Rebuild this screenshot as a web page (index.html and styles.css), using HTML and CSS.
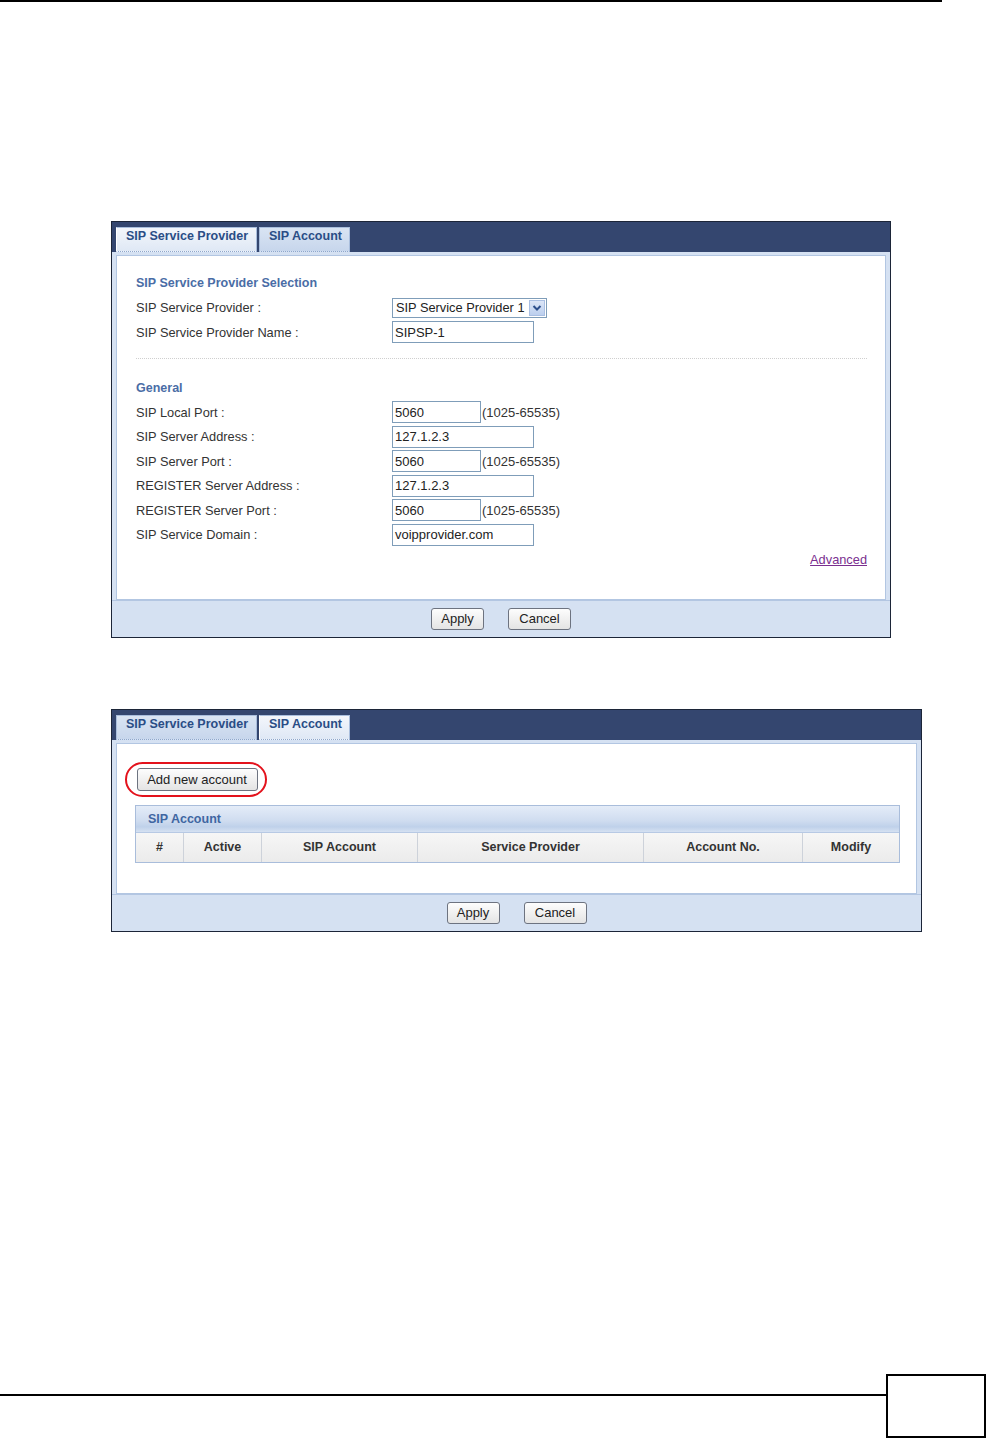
FILE: index.html
```html
<!DOCTYPE html>
<html lang="en">
<head>
  <meta charset="UTF-8" />
  <title>VoIP &gt; SIP Settings</title>
  <link rel="stylesheet" href="styles.css">
</head>
<body>
  <div class="page">
    <div class="top-rule"></div>

    <!-- Screen 1: SIP Service Provider -->
    <div class="panel panel-provider">
      <div class="panel-head">
        <div class="tab tab-wide active">SIP Service Provider</div>
        <div class="tab tab-narrow">SIP Account</div>
      </div>
      <div class="panel-body provider-body">
        <div class="row section-title">SIP Service Provider Selection</div>
        <div class="row">
          <span class="label">SIP Service Provider :</span>
          <div class="select">
            <span class="select-text">SIP Service Provider 1</span>
            <span class="select-btn">
              <svg width="10" height="8" viewBox="0 0 10 8"><path d="M1.5 2 L5 5.5 L8.5 2" fill="none" stroke="#2c4f8c" stroke-width="2"/></svg>
            </span>
          </div>
        </div>
        <div class="row">
          <span class="label">SIP Service Provider Name :</span>
          <span class="input">SIPSP-1</span>
        </div>
        <div class="divider"></div>
        <div class="row section-title">General</div>
        <div class="row">
          <span class="label">SIP Local Port :</span>
          <span class="input short">5060</span><span class="hint">(1025-65535)</span>
        </div>
        <div class="row">
          <span class="label">SIP Server Address :</span>
          <span class="input">127.1.2.3</span>
        </div>
        <div class="row">
          <span class="label">SIP Server Port :</span>
          <span class="input short">5060</span><span class="hint">(1025-65535)</span>
        </div>
        <div class="row">
          <span class="label">REGISTER Server Address :</span>
          <span class="input">127.1.2.3</span>
        </div>
        <div class="row">
          <span class="label">REGISTER Server Port :</span>
          <span class="input short">5060</span><span class="hint">(1025-65535)</span>
        </div>
        <div class="row">
          <span class="label">SIP Service Domain :</span>
          <span class="input">voipprovider.com</span>
        </div>
        <div class="row row-right">
          <a class="advanced" href="#">Advanced</a>
        </div>
      </div>
      <div class="panel-foot">
        <button class="btn btn-apply">Apply</button>
        <button class="btn btn-cancel">Cancel</button>
      </div>
    </div>

    <!-- Screen 2: SIP Account -->
    <div class="panel panel-account">
      <div class="panel-head">
        <div class="tab tab-wide">SIP Service Provider</div>
        <div class="tab tab-narrow active">SIP Account</div>
      </div>
      <div class="panel-body account-body">
        <div class="highlight">
          <button class="btn btn-add">Add new account</button>
        </div>
        <div class="table">
          <div class="table-title">SIP Account</div>
          <div class="table-head">
            <span class="col c-num">#</span>
            <span class="col c-active">Active</span>
            <span class="col c-account">SIP Account</span>
            <span class="col c-provider">Service Provider</span>
            <span class="col c-no">Account No.</span>
            <span class="col c-modify">Modify</span>
          </div>
        </div>
      </div>
      <div class="panel-foot">
        <button class="btn btn-apply">Apply</button>
        <button class="btn btn-cancel">Cancel</button>
      </div>
    </div>

    <div class="page-foot">
      <div class="foot-line"></div>
      <div class="page-num"></div>
    </div>
  </div>
</body>
</html>
```

FILE: styles.css
```css
* {
  margin: 0;
  padding: 0;
  box-sizing: border-box;
}

body {
  font-family: 'Liberation Sans', Arial, sans-serif;
  background: #fff;
  color: #333;
  font-size: 12.8px;
}

.page {
  width: 987px;
  height: 1438px;
}

.top-rule {
  width: 942px;
  height: 2px;
  background: #000;
}

/* Screen frame */
.panel {
  margin-left: 111px;
  border: 1px solid #1c2538;
  background: #d5e1f2;
}

.panel-provider {
  width: 780px;
  margin-top: 219px;
}

.panel-account {
  width: 811px;
  margin-top: 71px;
}

.panel-head {
  height: 30px;
  background: #34466f;
  display: flex;
  align-items: flex-end;
  gap: 2px;
  padding-left: 4px;
}

.tab {
  height: 25px;
  display: flex;
  align-items: center;
  padding: 0 0 7px 9px;
  font-weight: bold;
  font-size: 12.5px;
  color: #2a4d86;
  background: linear-gradient(#d9e4f3, #c7d6ec);
  border: 1px solid #a9bedd;
  border-bottom: 1px dotted #8ea7cc;
}

.tab.active {
  background: linear-gradient(#f3f6fb, #dfe8f5);
  border-left-color: #fff;
}

.tab-wide {
  width: 141px;
}

.tab-narrow {
  width: 91px;
}

.panel-body {
  margin: 3px 4px 0;
  background: #fff;
  border: 1px solid #b2c6e2;
}

.panel-foot {
  height: 37px;
  border-top: 1px solid #b3c6e2;
  display: flex;
  align-items: center;
  justify-content: center;
  gap: 24px;
}

/* Screen 1 form */
.provider-body {
  padding: 15px 18px 27px 19px;
}

.row {
  height: 24.5px;
  display: flex;
  align-items: center;
}

.section-title {
  font-weight: bold;
  font-size: 12.5px;
  color: #4a6da6;
}

.label {
  width: 256px;
  color: #333;
}

.input {
  width: 142px;
  height: 22px;
  border: 1px solid #7f9db9;
  padding-left: 2px;
  display: flex;
  align-items: center;
  font-size: 13px;
  color: #222;
  background: #fff;
}

.input.short {
  width: 89px;
}

.hint {
  padding-left: 1px;
  font-size: 13px;
  color: #333;
}

.select {
  width: 155px;
  height: 20px;
  border: 1px solid #7f9db9;
  display: flex;
  align-items: center;
  justify-content: space-between;
  padding: 0 1px 0 3px;
  color: #222;
}

.select-btn {
  width: 16px;
  height: 16px;
  background: linear-gradient(#dbe5f7, #bccfee);
  border: 1px solid #a9bfe3;
  display: flex;
  align-items: center;
  justify-content: center;
}

.divider {
  margin: 13px 0 17px;
  border-top: 1px dotted #cfcfcf;
}

.row-right {
  justify-content: flex-end;
}

.advanced {
  color: #7a2f8f;
  text-decoration: underline;
}

/* Buttons */
.btn {
  height: 22px;
  font-family: 'Liberation Sans', Arial, sans-serif;
  font-size: 13px;
  color: #222;
  background: linear-gradient(#fdfdfd, #e4e4e4);
  border: 1px solid #6d7380;
  border-radius: 3px;
}

.btn-apply {
  width: 53px;
}

.btn-cancel {
  width: 63px;
}

.btn-add {
  width: 121px;
  height: 23px;
}

/* Screen 2 */
.account-body {
  padding: 18px 16px 30px 8px;
}

.highlight {
  display: flex;
  width: 142px;
  height: 35px;
  align-items: center;
  padding-left: 9.5px;
  border: 2.5px solid #e3121c;
  border-radius: 18px;
}

.table {
  margin: 8px 0 0 10px;
  width: 765px;
  border: 1px solid #a9bddb;
}

.table-title {
  height: 27px;
  padding-left: 12px;
  display: flex;
  align-items: center;
  font-weight: bold;
  font-size: 12.5px;
  color: #3f66a2;
  background: linear-gradient(#e4ecf8, #d0ddf0 55%, #bfd1ea 80%, #d5e1f2);
  border-bottom: 1px solid #b7c9e4;
}

.table-head {
  height: 29px;
  display: flex;
  background: linear-gradient(#f6f6f6, #ebebeb);
}

.col {
  display: flex;
  align-items: center;
  justify-content: center;
  font-weight: bold;
  font-size: 12.5px;
  color: #333;
  border-right: 1px solid #cdd2da;
}

.col:last-child {
  border-right: none;
}

.c-num { width: 48px; }
.c-active { width: 78px; }
.c-account { width: 156px; }
.c-provider { width: 226px; }
.c-no { width: 159px; }
.c-modify { flex: 1; }

/* Page footer */
.page-foot {
  margin-top: 442px;
  display: flex;
  align-items: flex-start;
}

.foot-line {
  flex: 1;
  margin-top: 20px;
  border-top: 2px solid #000;
}

.page-num {
  width: 100px;
  height: 64px;
  margin-right: 1px;
  border: 2px solid #000;
}
```
